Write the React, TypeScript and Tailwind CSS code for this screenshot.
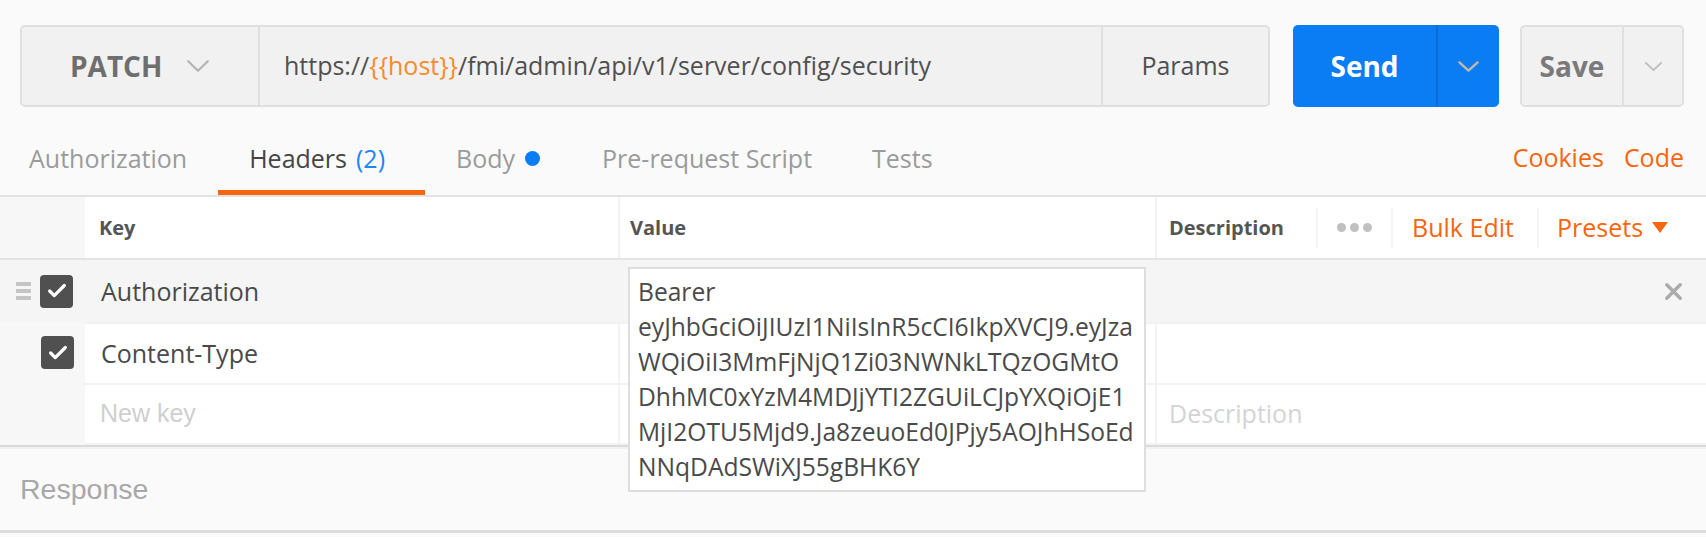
import { Check, X } from 'lucide-react';

const token = [
  'Bearer',
  'eyJhbGciOiJIUzI1NiIsInR5cCI6IkpXVCJ9.eyJza',
  'WQiOiI3MmFjNjQ1Zi03NWNkLTQzOGMtO',
  'DhhMC0xYzM4MDJjYTI2ZGUiLCJpYXQiOjE1',
  'MjI2OTU5Mjd9.Ja8zeuoEd0JPjy5AOJhHSoEd',
  'NNqDAdSWiXJ55gBHK6Y',
];

function Chevron({ w, h, color, stroke }: { w: number; h: number; color: string; stroke: number }) {
  return (
    <svg width={w} height={h} viewBox={`0 0 ${w} ${h}`} fill="none">
      <polyline
        points={`${stroke},${stroke} ${w / 2},${h - stroke} ${w - stroke},${stroke}`}
        stroke={color}
        strokeWidth={stroke}
        strokeLinecap="round"
        strokeLinejoin="round"
      />
    </svg>
  );
}

function Checkbox() {
  return (
    <div className="w-[33px] h-[33px] rounded-[4px] bg-[#505050] flex items-center justify-center">
      <Check size={22} strokeWidth={3.5} color="#fff" />
    </div>
  );
}

function DragHandle() {
  return (
    <div className="flex flex-col gap-[3px] w-[15px]">
      <div className="h-[4px] bg-[#c4c4c4]" />
      <div className="h-[4px] bg-[#c4c4c4]" />
      <div className="h-[4px] bg-[#c4c4c4]" />
    </div>
  );
}

export default function App() {
  return (
    <div
      className="w-[1706px] h-[537px] bg-[#fafafa] overflow-hidden text-[#505050]"
      style={{ fontFamily: '"Open Sans", sans-serif' }}
    >
      {/* request bar */}
      <div className="flex h-[107px] pt-[25px] pl-[20px] pr-[22px]">
        <div className="flex w-[1250px] h-[82px] rounded-[5px] border-2 border-[#e0e0e0] bg-[#f1f1f1]">
          <div className="w-[238px] flex items-center pl-[48px] gap-[24px] border-r-2 border-[#e0e0e0]">
            <span className="text-[28px] font-bold text-[#6e6e6e]">PATCH</span>
            <Chevron w={24} h={14} color="#b4b4b4" stroke={2.2} />
          </div>
          <div className="flex-1 flex items-center pl-[24px] text-[25px] text-[#505050]">
            <span>https://</span>
            <span className="text-[#f58b2b]">{'{{host}}'}</span>
            <span>/fmi/admin/api/v1/server/config/security</span>
          </div>
          <div className="w-[167px] flex items-center justify-center border-l-2 border-[#e0e0e0] text-[25px] text-[#505050]">
            Params
          </div>
        </div>

        <div className="ml-[23px] flex w-[206px] h-[82px] rounded-[5px] bg-[#0a7cf4]">
          <div className="w-[143px] flex items-center justify-center text-[28px] font-bold text-white">Send</div>
          <div className="flex-1 flex items-center justify-center border-l-2 border-[#0a6cd6]">
            <Chevron w={23} h={13} color="#c2b9a6" stroke={2.4} />
          </div>
        </div>

        <div className="ml-[21px] flex w-[164px] h-[82px] rounded-[5px] border-2 border-[#e0e0e0] bg-[#f1f1f1]">
          <div className="w-[100px] flex items-center justify-center text-[28px] font-bold text-[#7a7a7a]">Save</div>
          <div className="flex-1 flex items-center justify-center border-l-2 border-[#e0e0e0]">
            <Chevron w={19} h={11} color="#bcbcbc" stroke={1.8} />
          </div>
        </div>
      </div>

      {/* tabs */}
      <div className="flex h-[90px] border-b-2 border-[#e2e2e2] text-[25px]">
        <div className="flex h-full">
          <div className="flex items-center pt-[20px] pl-[29px] pr-[31px] text-[#9b9b9b] border-b-[5px] border-transparent">
            Authorization
          </div>
          <div className="flex items-center pt-[20px] pl-[31px] pr-[40px] text-[#454545] border-b-[5px] border-[#f7660f]">
            Headers <span className="ml-[9px] text-[#1e86f5]">(2)</span>
          </div>
          <div className="flex items-center pt-[20px] pl-[31px] pr-[31px] text-[#9b9b9b] border-b-[5px] border-transparent">
            Body <span className="ml-[10px] w-[15px] h-[15px] rounded-full bg-[#0a7cf4]" />
          </div>
          <div className="flex items-center pt-[20px] pl-[31px] pr-[30px] text-[#9b9b9b] border-b-[5px] border-transparent">
            Pre-request Script
          </div>
          <div className="flex items-center pt-[20px] pl-[30px] text-[#9b9b9b] border-b-[5px] border-transparent">
            Tests
          </div>
        </div>
        <div className="ml-auto flex items-center gap-[20px] pr-[22px] pt-[14px] text-[#f7660f]">
          <span>Cookies</span>
          <span>Code</span>
        </div>
      </div>

      {/* headers table */}
      <div className="border-b-2 border-[#dadada]">
        {/* header row */}
        <div className="flex h-[63px] border-b-2 border-[#e4e4e4] bg-[#f7f7f7]">
          <div className="w-[85px]" />
          <div className="w-[533px] bg-white flex items-center pl-[14px] text-[20px] font-bold text-[#555]">Key</div>
          <div className="w-[537px] bg-white border-l-2 border-[#f2f2f2] flex items-center pl-[10px] text-[20px] font-bold text-[#555]">
            Value
          </div>
          <div className="flex-1 bg-white border-l-2 border-[#f2f2f2] flex items-center">
            <div className="w-[159px] pl-[12px] text-[20px] font-bold text-[#555]">Description</div>
            <div className="w-[75px] h-[40px] border-l-2 border-[#f4f4f4] flex items-center justify-center gap-[4px]">
              <span className="w-[9px] h-[9px] rounded-full bg-[#c0c0c0]" />
              <span className="w-[9px] h-[9px] rounded-full bg-[#c0c0c0]" />
              <span className="w-[9px] h-[9px] rounded-full bg-[#c0c0c0]" />
            </div>
            <div className="w-[146px] h-[40px] border-l-2 border-[#f4f4f4] flex items-center justify-center pr-[4px] text-[25px] text-[#f7660f]">
              Bulk Edit
            </div>
            <div className="flex-1 h-[40px] border-l-2 border-[#f4f4f4] flex items-center pl-[18px] gap-[9px] text-[25px] text-[#f7660f]">
              Presets
              <svg width="16" height="11" viewBox="0 0 16 11">
                <path d="M0 0 H16 L8 11 Z" fill="#f7660f" />
              </svg>
            </div>
          </div>
        </div>

        {/* Authorization row */}
        <div className="flex h-[62px] bg-[#f5f5f5]">
          <div className="w-[85px] flex items-center pl-[16px] gap-[9px]">
            <DragHandle />
            <Checkbox />
          </div>
          <div className="w-[533px] flex items-center pl-[16px] pt-[2px] text-[25px] text-[#4a4a4a]">Authorization</div>
          <div className="w-[537px] relative">
            <div className="absolute left-[10px] top-[7px] w-[518px] h-[225px] z-10 bg-white border-2 border-[#dedede] pl-[8px] pt-[5px] text-[24.6px] leading-[35px] text-[#4a4a4a]">
              {token.map((line) => (
                <div key={line}>{line}</div>
              ))}
            </div>
          </div>
          <div className="flex-1 flex items-center justify-end pr-[19px]">
            <X size={27} strokeWidth={3} color="#ababab" />
          </div>
        </div>

        {/* Content-Type row */}
        <div className="flex h-[61px] bg-[#f7f7f7]">
          <div className="w-[85px] flex items-center pl-[41px]">
            <Checkbox />
          </div>
          <div className="w-[533px] bg-white border-t-2 border-[#f2f2f2] flex items-center pl-[16px] text-[25px] text-[#4a4a4a]">
            Content-Type
          </div>
          <div className="w-[537px] bg-white border-t-2 border-l-2 border-[#f2f2f2]" />
          <div className="flex-1 bg-white border-t-2 border-l-2 border-[#f2f2f2]" />
        </div>

        {/* New key row */}
        <div className="flex h-[62px] bg-[#f7f7f7]">
          <div className="w-[85px]" />
          <div
            className="w-[533px] bg-white border-y-2 border-[#f2f2f2] flex items-center pl-[15px] text-[25px] text-[#cfcfcf]"
            style={{ fontFamily: '"Liberation Sans", Arial, sans-serif' }}
          >
            New key
          </div>
          <div className="w-[537px] bg-white border-y-2 border-l-2 border-[#f2f2f2]" />
          <div className="flex-1 bg-white border-y-2 border-l-2 border-[#f2f2f2] flex items-center pl-[12px] text-[25px] text-[#d4d4d4]">
            Description
          </div>
        </div>
      </div>

      {/* response */}
      <div className="h-[86px] bg-[#fafafa] border-t-2 border-[#f2f2f2] border-b-[3px] border-b-[#dcdcdc] flex items-center pl-[20px]">
        <span
          className="text-[28.5px] text-[#a8a8a8]"
          style={{ fontFamily: '"Liberation Sans", Arial, sans-serif' }}
        >
          Response
        </span>
      </div>
    </div>
  );
}
